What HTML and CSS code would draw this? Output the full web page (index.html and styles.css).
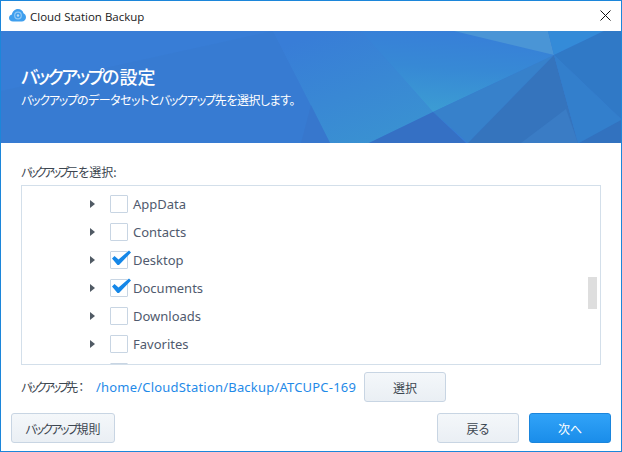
FILE: index.html
```html
<!DOCTYPE html>
<html lang="ja">
<head>
<meta charset="utf-8">
<title>Cloud Station Backup</title>
<link rel="stylesheet" href="styles.css">
</head>
<body>
<div class="window">
  <header class="titlebar">
    <svg class="app-icon" width="17" height="14" viewBox="0 0 17 14">
      <path d="M4 13.500C1.800 13.500 0 12 0 10c0-1.800 1.100-3 2.900-3.400C3.300 3.500 5.800 1 9 1c2.700 0 5 1.800 5.500 4.200C16 5.900 17 7.400 17 9.200c0 2.400-1.900 4.300-4.300 4.300z" fill="#3f9fee"/>
      <circle cx="9" cy="7.500" r="3.300" fill="none" stroke="#8fc8f5" stroke-width="1.200"/>
      <circle cx="9" cy="7.500" r="1.200" fill="#b8dcf8"/>
    </svg>
    <span class="app-name">Cloud Station Backup</span>
    <svg class="close" width="11" height="11" viewBox="0 0 11 11"><path d="M.5.500l10 10M10.500.500l-10 10" stroke="#111" stroke-width="1" fill="none"/></svg>
  </header>
  <section class="banner">
    <svg class="banner-art" width="620" height="112" viewBox="0 0 620 112" preserveAspectRatio="none">
      <defs>
        <linearGradient id="fan" x1="0.300" y1="1" x2="0.450" y2="0">
          <stop offset="0" stop-color="#3c9dd3"/>
          <stop offset="0.550" stop-color="#3789d5"/>
          <stop offset="1" stop-color="#377fd8"/>
        </linearGradient>
        <linearGradient id="mid" x1="0.850" y1="1" x2="0.300" y2="0">
          <stop offset="0" stop-color="#3a93d1"/>
          <stop offset="1" stop-color="#387dd7"/>
        </linearGradient>
      </defs>
      <rect width="620" height="112" fill="#387dd6"/>
      <polygon points="272,0 310,74 329,112 0,112 0,60" fill="#377bd0" opacity=".7"/>
      <polygon points="272,0 360,0 432,81 368,112 329,112" fill="url(#mid)"/>
      <polygon points="360,0 453,0 553,24 432,81" fill="url(#fan)"/>
      <polygon points="453,0 547,0 553,24" fill="#4a95d6"/>
      <polygon points="547,0 603,0 553,24" fill="#348bd8"/>
      <polygon points="603,0 620,0 620,88 553,24" fill="#3079c6"/>
      <polygon points="432,81 553,24 467,112" fill="#3781cb"/>
      <polygon points="553,24 467,112 577,112" fill="#3574bd"/>
      <polygon points="520,112 577,112 565,78" fill="#3a7cc5"/>
      <polygon points="553,24 620,88 620,90 578,112 577,112" fill="#337fcc"/>
      <polygon points="620,89 578,112 620,112" fill="#3272bf"/>
      <polygon points="432,81 368,112 465,112" fill="#3570c4"/>
      <polygon points="310,74 329,112 300,112" fill="#3777cc" opacity=".8"/>
    </svg>
    <div class="banner-text">
      <h1 class="banner-title"><span class="kana">バックアップ</span>の設定</h1>
      <p class="banner-sub"><span class="kana">バックアップ</span>のデータセットと<span class="kana">バックアップ</span>先を選択します。</p>
    </div>
  </section>
  <main class="content">
    <div class="source-label"><span class="kana">バックアップ</span>元を選択:</div>
    <div class="tree">
      <div class="row"><i class="arrow"></i><span class="box"></span><span class="name">AppData</span></div>
      <div class="row"><i class="arrow"></i><span class="box"></span><span class="name">Contacts</span></div>
      <div class="row"><i class="arrow"></i><span class="box"><svg class="check" width="20" height="16" viewBox="0 0 20 16"><path d="M1 8.500L3.500 6L7.500 9.500L18 .5L20 2.500L8 15L6.500 15z" fill="#1587e8"/></svg></span><span class="name">Desktop</span></div>
      <div class="row"><i class="arrow"></i><span class="box"><svg class="check" width="20" height="16" viewBox="0 0 20 16"><path d="M1 8.500L3.500 6L7.500 9.500L18 .5L20 2.500L8 15L6.500 15z" fill="#1587e8"/></svg></span><span class="name">Documents</span></div>
      <div class="row"><i class="arrow"></i><span class="box"></span><span class="name">Downloads</span></div>
      <div class="row"><i class="arrow"></i><span class="box"></span><span class="name">Favorites</span></div>
      <div class="row"><i class="arrow"></i><span class="box"></span></div>
      <div class="scroll-thumb"></div>
    </div>
    <div class="dest">
      <span class="dest-label"><span class="kana">バックアップ</span>先：</span>
      <a class="dest-path">/home/CloudStation/Backup/ATCUPC-169</a>
      <button class="btn btn-select">選択</button>
    </div>
  </main>
  <footer class="actions">
    <button class="btn btn-rules"><span class="kana">バックアップ</span>規則</button>
    <div class="actions-right">
      <button class="btn btn-nav">戻る</button>
      <button class="btn btn-nav btn-primary">次へ</button>
    </div>
  </footer>
</div>
</body>
</html>
```
FILE: styles.css
```css
* { box-sizing: border-box; }
html, body { margin: 0; padding: 0; }
body {
  width: 622px;
  height: 452px;
  overflow: hidden;
  background: #fff;
  font-family: "Noto Sans", "Noto Sans CJK JP", sans-serif;
}
.window {
  width: 622px;
  height: 452px;
  border: 1px solid #1c86da;
  display: flex;
  flex-direction: column;
  background: #fff;
}
.titlebar {
  height: 30px;
  flex: none;
  display: flex;
  align-items: center;
  padding: 0 10px 0 8px;
}
.app-icon { flex: none; margin-top: -2px; }
.app-name {
  margin-left: 4px;
  font-family: "Open Sans", sans-serif;
  font-size: 11.5px;
  color: #1a1a1a;
}
.close { margin-left: auto; margin-top: -1px; }
.banner {
  height: 112px;
  flex: none;
  position: relative;
  color: #fff;
  overflow: hidden;
}
.banner-art { position: absolute; left: 0; top: 0; display: block; }
.banner-text {
  position: relative;
  padding: 34px 0 0 20px;
  font-family: "Noto Sans CJK JP", sans-serif;
  font-feature-settings: "palt";
}
.banner-title {
  margin: 0;
  font-size: 18px;
  line-height: 22px;
  font-weight: 500;
}
.banner-title .kana { letter-spacing: -2.3px; }
.banner-sub {
  margin: 5px 0 0;
  font-size: 12px;
  line-height: 16px;
  letter-spacing: -.5px;
}
.banner-sub .kana { letter-spacing: -1.2px; }
.content {
  flex: 1;
  padding: 19px 20px 0;
  font-family: "Noto Sans CJK JP", sans-serif;
  font-feature-settings: "palt";
}
.source-label, .dest-label {
  font-size: 12px;
  line-height: 16px;
  color: #3c4650;
  white-space: nowrap;
}
.source-label .kana, .dest-label .kana { letter-spacing: -3px; }
.source-label { height: 23px; padding-top: 2px; }
.tree {
  position: relative;
  width: 580px;
  height: 180px;
  border: 1px solid #d3dfea;
  padding-top: 4px;
  overflow: hidden;
}
.row {
  height: 28px;
  display: flex;
  align-items: center;
  padding-left: 68px;
  font-family: "Noto Sans", sans-serif;
}
.arrow {
  width: 0;
  height: 0;
  border-left: 5px solid #505a64;
  border-top: 4px solid transparent;
  border-bottom: 4px solid transparent;
  margin-right: 15px;
}
.box {
  position: relative;
  width: 18px;
  height: 18px;
  border: 1px solid #c8d5e3;
  border-radius: 1px;
  background: #fff;
  flex: none;
}
.check { position: absolute; left: 0; top: -2px; }
.name {
  margin-left: 5px;
  font-size: 13px;
  color: #505a6e;
}
.scroll-thumb {
  position: absolute;
  left: 566px;
  top: 91px;
  width: 9px;
  height: 32px;
  background: #dedede;
}
.dest {
  height: 30px;
  margin-top: 7px;
  display: flex;
  align-items: center;
}
.dest-label { width: 75px; flex: none; }
.dest-path {
  font-family: "Noto Sans", sans-serif;
  font-size: 13px;
  letter-spacing: .2px;
  color: #1f8ae8;
  width: 268px;
  flex: none;
  white-space: nowrap;
}
.btn {
  height: 30px;
  border: 1px solid #c8d5e3;
  border-radius: 3px;
  background: linear-gradient(#f4f7fa, #eaeff4);
  color: #3c4650;
  font-family: "Noto Sans CJK JP", sans-serif;
  font-feature-settings: "palt";
  font-size: 12px;
  padding: 0;
}
.btn .kana { letter-spacing: -2px; }
.btn-select { width: 82px; }
.actions {
  height: 38px;
  margin-top: 10px;
  flex: none;
  display: flex;
  align-items: flex-start;
  justify-content: space-between;
  padding: 0 10px;
}
.btn-rules { width: 104px; }
.actions-right { display: flex; gap: 10px; }
.btn-nav { width: 82px; }
.btn-primary {
  background: linear-gradient(#31a3f8, #1a8dea);
  border-color: #1a85dc;
  color: #fff;
}
```
